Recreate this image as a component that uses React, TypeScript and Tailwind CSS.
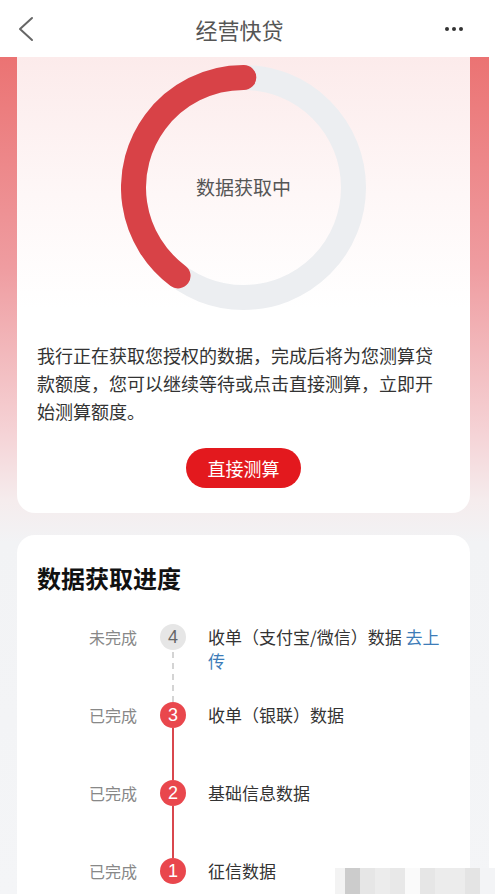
import React from "react";

const steps = [
  { n: 4, done: false, label: "未完成", text: "收单（支付宝/微信）数据 ", link: "去上传" },
  { n: 3, done: true, label: "已完成", text: "收单（银联）数据" },
  { n: 2, done: true, label: "已完成", text: "基础信息数据" },
  { n: 1, done: true, label: "已完成", text: "征信数据" },
];

function Ring() {
  // red arc runs from ~7 o'clock up to 12 o'clock
  return (
    <svg width="245" height="245" viewBox="0 0 245 245">
      <circle cx="122.5" cy="122.5" r="110" fill="none" stroke="#eceef1" strokeWidth="25" />
      <circle
        cx="122.5"
        cy="122.5"
        r="110"
        fill="none"
        stroke="#d84247"
        strokeWidth="25"
        strokeLinecap="round"
        strokeDasharray="275.5 691"
        transform="rotate(126.5 122.5 122.5)"
      />
    </svg>
  );
}

export default function App() {
  return (
    <div className="w-[501px] h-[894px] bg-white font-['Noto_Sans_CJK_SC','Noto_Sans',sans-serif] relative overflow-hidden">
      <div className="w-[489px]">
        {/* Header */}
        <header className="h-[57px] flex items-center justify-between px-[18px] bg-white">
          <svg width="16" height="26" viewBox="0 0 16 26">
            <polyline points="14,2 2,13 14,24" fill="none" stroke="#666" strokeWidth="2" strokeLinecap="round" strokeLinejoin="round" />
          </svg>
          <h1 className="text-[22px] text-[#555] leading-none">经营快贷</h1>
          <div className="flex gap-[3px] w-[20px] mr-[6px]">
            <span className="w-[4px] h-[4px] rounded-full bg-[#333]" />
            <span className="w-[4px] h-[4px] rounded-full bg-[#333]" />
            <span className="w-[4px] h-[4px] rounded-full bg-[#333]" />
          </div>
        </header>

        <div className="pl-[17px] pr-[19px] h-[837px] overflow-hidden bg-[linear-gradient(180deg,#eb7373_0%,#ef9ca0_25%,#f5d3d6_45%,#f5eced_53%,#f2f3f5_58%,#f4f5f7_100%)]">
          {/* Progress card */}
          <section className="rounded-b-[18px] bg-[linear-gradient(180deg,#fcebeb_0%,#fef7f7_30%,#ffffff_55%)] pt-[8px] pb-[25px] px-[20px] flex flex-col items-center">
            <div className="relative w-[245px] h-[245px]">
              <Ring />
              <div className="absolute inset-0 flex items-center justify-center text-[19px] text-[#555]">数据获取中</div>
            </div>
            <p className="mt-[31px] text-[18px] leading-[28px] text-[#333] w-full">
              我行正在获取您授权的数据，完成后将为您测算贷款额度，您可以继续等待或点击直接测算，立即开始测算额度。
            </p>
            <button className="mt-[23px] w-[115px] h-[40px] rounded-full bg-[#e3191e] text-white text-[18px]">直接测算</button>
          </section>

          {/* Steps card */}
          <section className="mt-[22px] rounded-t-[18px] bg-white pt-[27px] px-[20px] pb-[20px]">
            <h2 className="text-[24px] leading-[32px] font-bold text-[#111]">数据获取进度</h2>
            <div className="mt-[30px]">
              {steps.map((s, i) => (
                <div key={s.n} className="flex items-start h-[78px]">
                  <div className="w-[100px] text-right text-[16px] leading-[26px] text-[#888]">{s.label}</div>
                  <div className="ml-[23px] w-[26px] h-full flex flex-col items-center">
                    <div
                      className={
                        s.done
                          ? "w-[26px] h-[26px] rounded-full bg-[#e9474d] text-white text-[18px] leading-none flex items-center justify-center font-['Liberation_Sans',sans-serif]"
                          : "w-[26px] h-[26px] rounded-full bg-[#e6e6e6] text-[#666] text-[18px] leading-none flex items-center justify-center font-['Liberation_Sans',sans-serif]"
                      }
                    >
                      {s.n}
                    </div>
                    {i < steps.length - 1 &&
                      (s.done ? (
                        <div className="flex-1 w-[2px] bg-[#d9474d]" />
                      ) : (
                        <div className="flex-1 w-0 border-l-2 border-dashed border-[#d4d4d4] mt-[2px]" />
                      ))}
                  </div>
                  <p className="ml-[22px] flex-1 text-[17px] leading-[24px] pt-[1px] text-[#333]">
                    {s.text}
                    {s.link && <span className="text-[#3d7cb8]">{s.link}</span>}
                  </p>
                </div>
              ))}
            </div>
          </section>
        </div>
      </div>

      {/* pixelated watermark patch, bottom right */}
      <div className="absolute right-[6px] bottom-0 h-[26px] flex">
        <div className="w-[10px] bg-[#f3f3f3]" />
        <div className="w-[15px] bg-[#cccccc]" />
        <div className="w-[15px] bg-[#e6e6e6]" />
        <div className="w-[15px] bg-[#ececec]" />
        <div className="w-[15px] bg-[#e8e8e8]" />
        <div className="w-[15px] bg-[#fafafa]" />
        <div className="w-[15px] bg-[#e6e6e6]" />
        <div className="w-[15px] bg-[#ececec]" />
        <div className="w-[15px] bg-[#ececec]" />
        <div className="w-[15px] bg-[#e4e4e4]" />
        <div className="w-[15px] bg-[#f3f4f6]" />
      </div>
    </div>
  );
}
